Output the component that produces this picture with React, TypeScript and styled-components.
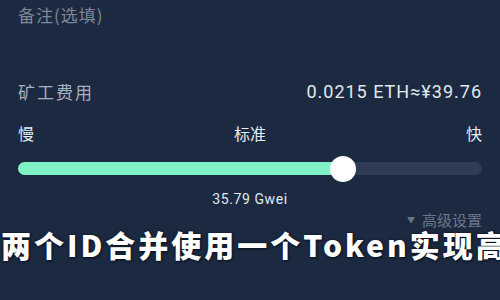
import React from "react";
import styled, { createGlobalStyle } from "styled-components";

const Global = createGlobalStyle`
  html, body { margin: 0; padding: 0; background: #1c2a41; }
  body { width: 500px; height: 300px; overflow: hidden; font-family: "Noto Sans CJK SC", "Noto Sans", sans-serif; }
`;

const Page = styled.div`
  position: relative;
  width: 500px;
  height: 300px;
  background: #1c2a41;
  overflow: hidden;
  box-sizing: border-box;
  padding: 4px 18px 0 18px;
  display: flex;
  flex-direction: column;
`;

const Label = styled.div<{ $dim?: boolean }>`
  font-size: 17px;
  letter-spacing: ${(p) => (p.$dim ? 1 : 2)}px;
  line-height: 22px;
  color: ${(p) => (p.$dim ? "#7d8797" : "#a7b0bf")};
`;

const FeeRow = styled.div`
  margin-top: 55px;
  height: 22px;
  display: flex;
  justify-content: space-between;
  align-items: center;
`;

const Amount = styled.div`
  font-family: Roboto, "Noto Sans", sans-serif;
  font-size: 18px;
  letter-spacing: 1px;
  line-height: 22px;
  color: #e2e8ef;
`;

const SpeedRow = styled.div`
  margin-top: 20px;
  display: flex;
  justify-content: space-between;
  font-size: 16px;
  line-height: 20px;
  color: #e6ebf1;
`;

const Track = styled.div`
  position: relative;
  margin-top: 19px;
  height: 13px;
  border-radius: 7px;
  background: #303c56;
`;

const Fill = styled.div`
  height: 100%;
  border-radius: 7px;
  background: #7ff3c6;
`;

const Thumb = styled.div`
  position: absolute;
  top: 50%;
  width: 26px;
  height: 26px;
  margin-left: -13px;
  margin-top: -13px;
  border-radius: 50%;
  background: #ffffff;
`;

const Gwei = styled.div`
  margin-top: 15px;
  text-align: center;
  font-family: Roboto, "Noto Sans", sans-serif;
  font-size: 14px;
  letter-spacing: 0.6px;
  line-height: 18px;
  color: #e2e8ef;
`;

const Advanced = styled.div`
  margin-top: 4px;
  display: flex;
  justify-content: flex-end;
  align-items: center;
  gap: 7px;
  font-size: 15px;
  line-height: 16px;
  color: #6c7789;
`;

const Caret = styled.span`
  font-size: 8px;
  color: #6c7789;
`;

const Caption = styled.div`
  position: absolute;
  left: 1px;
  top: 229px;
  white-space: nowrap;
  font-family: "Noto Sans CJK SC", sans-serif;
  font-weight: 900;
  font-size: 30px;
  line-height: 30px;
  letter-spacing: 3px;
  color: #ffffff;
  text-shadow: 0 0 3px #0b1220, 1px 1px 2px #0b1220;
`;

export default function App() {
  const pct = (343 - 18) / 464;
  return (
    <Page>
      <Global />
      <Label $dim>备注(选填)</Label>
      <FeeRow>
        <Label>矿工费用</Label>
        <Amount>0.0215 ETH≈¥39.76</Amount>
      </FeeRow>
      <SpeedRow>
        <span>慢</span>
        <span>标准</span>
        <span>快</span>
      </SpeedRow>
      <Track>
        <Fill style={{ width: `${pct * 100}%` }} />
        <Thumb style={{ left: `${pct * 100}%` }} />
      </Track>
      <Gwei>35.79 Gwei</Gwei>
      <Advanced>
        <Caret>▼</Caret>
        <span>高级设置</span>
      </Advanced>
      <Caption>两个ID合并使用一个Token实现高效管理</Caption>
    </Page>
  );
}
